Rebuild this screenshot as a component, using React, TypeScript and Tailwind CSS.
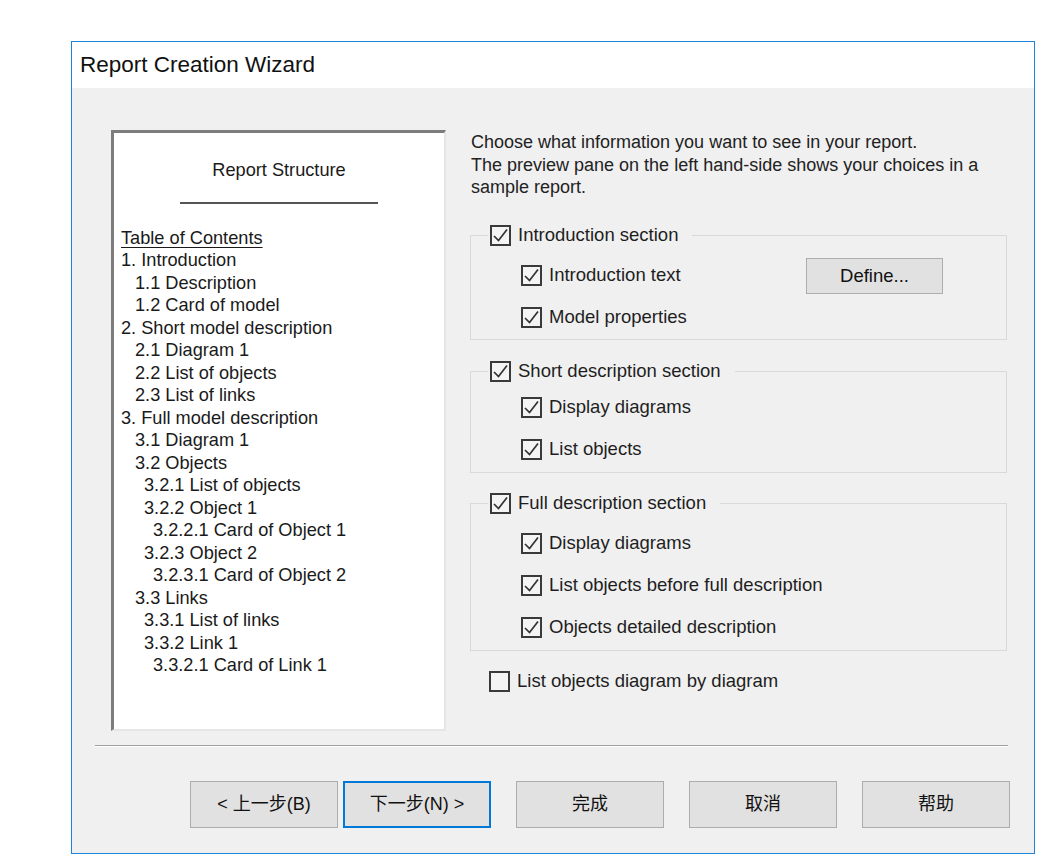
import React from 'react';

const sans = "font-['Liberation_Sans',Arial,sans-serif]";
const cjk = "font-['Liberation_Sans','Noto_Sans_CJK_SC',sans-serif]";

function Box({ checked }: { checked: boolean }) {
  return (
    <span className="w-[21px] h-[21px] shrink-0 border-2 border-[#3a3a3a] bg-[#f4f4f4] flex items-center justify-center">
      {checked && (
        <svg width="17" height="17" viewBox="0 0 17 17" fill="none">
          <path d="M2 9 L6.5 13.5 L15 2.5" stroke="#333" strokeWidth="1.7" />
        </svg>
      )}
    </span>
  );
}

function Check({ label, checked = true }: { label: string; checked?: boolean }) {
  return (
    <span className="flex items-center gap-[7px] text-[18.5px] text-[#1e1e1e] leading-none whitespace-nowrap">
      <Box checked={checked} />
      <span>{label}</span>
    </span>
  );
}

function Group({ title, items, pt, children }: { title: string; items: string[]; pt: string; children?: React.ReactNode }) {
  return (
    <fieldset className="border border-[#d9d9d9] m-0 p-0">
      <legend className="ml-[17px] pl-[2px] pr-[14px] h-[24px] flex items-center">
        <Check label={title} />
      </legend>
      <div className={pt}>
        {items.map((it, i) => (
          <div key={it} className="h-[42px] pl-[50px] flex items-center">
            <div className="w-[285px]">
              <Check label={it} />
            </div>
            {i === 0 && children}
          </div>
        ))}
      </div>
    </fieldset>
  );
}

const toc: [string, number][] = [
  ['1. Introduction', 0],
  ['1.1 Description', 1],
  ['1.2 Card of model', 1],
  ['2. Short model description', 0],
  ['2.1 Diagram 1', 1],
  ['2.2 List of objects', 1],
  ['2.3 List of links', 1],
  ['3. Full model description', 0],
  ['3.1 Diagram 1', 1],
  ['3.2 Objects', 1],
  ['3.2.1 List of objects', 2],
  ['3.2.2 Object 1', 2],
  ['3.2.2.1 Card of Object 1', 3],
  ['3.2.3 Object 2', 2],
  ['3.2.3.1 Card of Object 2', 3],
  ['3.3 Links', 1],
  ['3.3.1 List of links', 2],
  ['3.3.2 Link 1', 2],
  ['3.3.2.1 Card of Link 1', 3],
];

const indent = ['pl-0', 'pl-[14px]', 'pl-[23px]', 'pl-[32px]'];

function Btn({ label, focus }: { label: string; focus?: boolean }) {
  return (
    <button
      className={
        'h-[47px] w-[148px] bg-[#e1e1e1] text-[18px] text-[#111] flex items-center justify-center ' +
        cjk +
        (focus ? ' border-2 border-[#0078d7]' : ' border border-[#adadad]')
      }
    >
      {label}
    </button>
  );
}

export default function App() {
  return (
    <div className={'min-h-[864px] bg-white pl-[71px] pt-[41px] ' + sans}>
      <div className="w-[964px] h-[813px] border border-[#1c84da] flex flex-col">
        <div className="h-[46px] bg-white pl-[8px] flex items-center text-[22.5px] text-[#111]">
          Report Creation Wizard
        </div>
        <div className="flex-1 bg-[#f0f0f0]">
          <div className="flex pt-[42px] pl-[39px]">
            <div className="w-[335px] h-[601px] bg-white border-t-[3px] border-l-[3px] border-t-[#7d7d7d] border-l-[#7d7d7d] border-r-[2px] border-b-[2px] border-r-[#e6e6e6] border-b-[#e6e6e6] text-[18.2px] leading-[22.5px] text-[#1a1a1a]">
              <div className="pt-[26px] text-center">Report Structure</div>
              <div className="mx-auto mt-[20px] w-[198px] h-[2px] bg-[#555]" />
              <div className="pl-[7px] mt-[23px]">
                <div className="underline underline-offset-[3px]">Table of Contents</div>
                {toc.map(([t, l]) => (
                  <div key={t} className={indent[l] + ' whitespace-nowrap'}>
                    {t}
                  </div>
                ))}
              </div>
            </div>
            <div className="ml-[24px] w-[537px] pt-[1px]">
              <div className="text-[18px] leading-[22.5px] text-[#222] pl-[1px] whitespace-nowrap">
                Choose what information you want to see in your report.
                <br />
                The preview pane on the left hand-side shows your choices in a
                <br />
                sample report.
              </div>
              <div className="mt-[25px]">
                <Group title="Introduction section" items={['Introduction text', 'Model properties']} pt="pt-[7px]">
                  <span className="w-[137px] h-[36px] bg-[#e1e1e1] border border-[#adadad] flex items-center justify-center text-[18.5px] text-[#111]">
                    Define...
                  </span>
                </Group>
              </div>
              <div className="mt-[20px]">
                <Group title="Short description section" items={['Display diagrams', 'List objects']} pt="pt-[3px] pb-[1px]" />
              </div>
              <div className="mt-[19px]">
                <Group
                  title="Full description section"
                  items={['Display diagrams', 'List objects before full description', 'Objects detailed description']}
                  pt="pt-[7px] pb-[1px]"
                />
              </div>
              <div className="mt-[20px] pl-[19px] h-[22px] flex items-center">
                <Check label="List objects diagram by diagram" checked={false} />
              </div>
            </div>
          </div>
          <div className="ml-[23px] mt-[14px] w-[913px] h-[2px] border-t border-t-[#a0a0a0] border-b border-b-white" />
          <div className="flex pl-[118px] mt-[34px]">
            <Btn label="< 上一步(B)" />
            <div className="ml-[5px]">
              <Btn label="下一步(N) >" focus />
            </div>
            <div className="ml-[25px]">
              <Btn label="完成" />
            </div>
            <div className="ml-[25px]">
              <Btn label="取消" />
            </div>
            <div className="ml-[25px]">
              <Btn label="帮助" />
            </div>
          </div>
        </div>
      </div>
    </div>
  );
}
